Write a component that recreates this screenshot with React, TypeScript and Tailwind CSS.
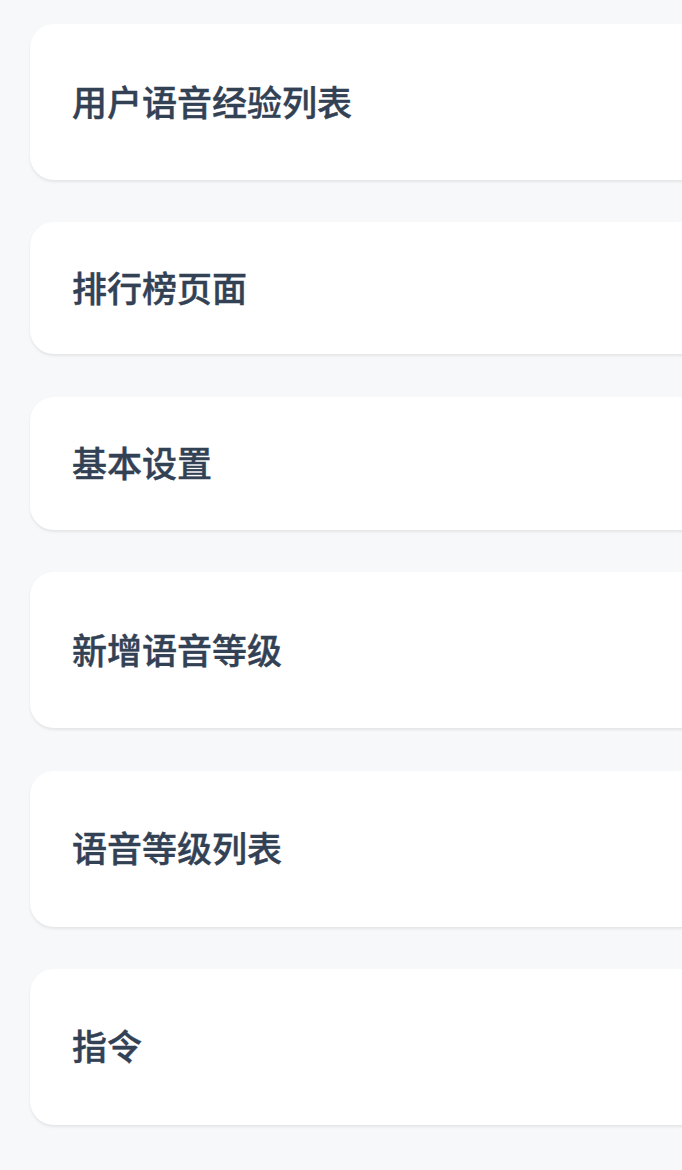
const items = [
  { label: '用户语音经验列表', h: 'h-[156px]' },
  { label: '排行榜页面', h: 'h-[132px]' },
  { label: '基本设置', h: 'h-[133px]' },
  { label: '新增语音等级', h: 'h-[156px]' },
  { label: '语音等级列表', h: 'h-[156px]' },
  { label: '指令', h: 'h-[156px]' },
];

export default function App() {
  return (
    <div
      className="min-h-screen w-full overflow-hidden bg-[#f7f8fa] pt-6 pb-12"
      style={{ fontFamily: '"Noto Sans CJK SC", "Noto Sans", sans-serif' }}
    >
      <div className="flex flex-col gap-[42.4px] pl-[30px]">
        {items.map((item) => (
          <div
            key={item.label}
            className={`${item.h} w-[720px] shrink-0 flex items-center rounded-[24px] bg-white pl-[42px] shadow-[0_2px_3px_rgba(0,0,0,0.08)]`}
          >
            <span className="text-[35px] font-medium text-[#334155] leading-none -translate-y-[2px] [-webkit-text-stroke:0.4px_#334155]">
              {item.label}
            </span>
          </div>
        ))}
      </div>
    </div>
  );
}
